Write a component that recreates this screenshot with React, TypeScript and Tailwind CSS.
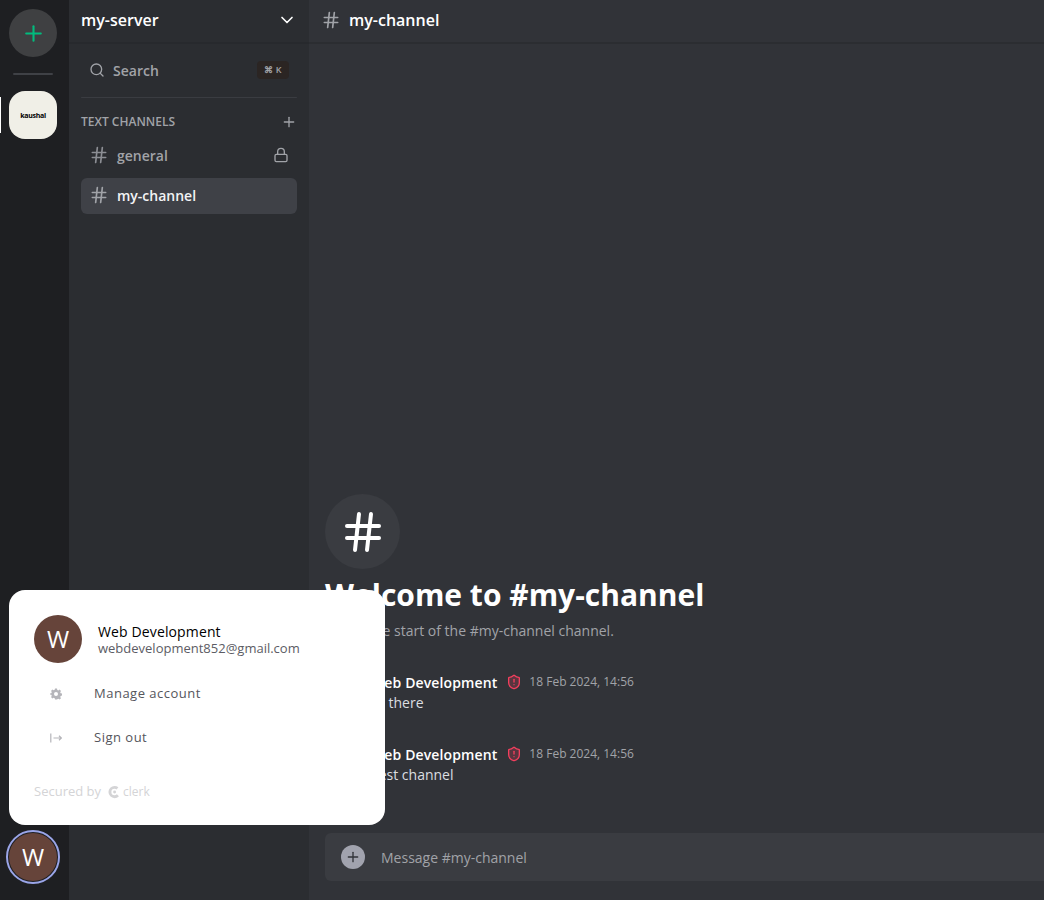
import { ChevronDown, Hash, Lock, Plus, Search } from "lucide-react";

const messages = [
  { text: "Hi there" },
  { text: "Test channel" },
];

function Avatar({ size }: { size: "sm" | "lg" }) {
  return (
    <div
      className={`flex items-center justify-center rounded-full bg-[#66443a] text-white shrink-0 ${
        size === "lg" ? "h-12 w-12 text-[24px]" : "h-9 w-9 text-[18px]"
      }`}
    >
      W
    </div>
  );
}

function ShieldAlert() {
  return (
    <svg width="16" height="16" viewBox="0 0 24 24" fill="#f43f5e33" stroke="#f43f5e" strokeWidth="2" strokeLinecap="round" strokeLinejoin="round">
      <path d="M20 13c0 5-3.5 7.5-7.66 8.95a1 1 0 0 1-.67-.01C7.5 20.5 4 18 4 13V6a1 1 0 0 1 1-1c2 0 4.5-1.2 6.24-2.72a1.17 1.17 0 0 1 1.52 0C14.51 3.81 17 5 19 5a1 1 0 0 1 1 1z" />
      <path d="M12 8v4" />
      <path d="M12 16h.01" />
    </svg>
  );
}

export default function App() {
  return (
    <div className="relative flex h-[900px] w-[1044px] overflow-hidden bg-[#313338] font-['Open_Sans',sans-serif] text-white">
      {/* Server rail */}
      <nav className="flex w-[69px] shrink-0 flex-col items-center bg-[#1e1f22] pt-[9px] pr-[3px] pb-4">
        <div className="flex h-12 w-12 items-center justify-center rounded-full bg-[#3f4042]">
          <Plus className="h-[25px] w-[25px] text-emerald-500" strokeWidth={2} />
        </div>
        <div className="mt-4 h-0.5 w-10 rounded bg-[#3f4146]" />
        <div className="relative mt-4 w-full">
          <div className="absolute left-0 top-[6px] h-9 w-[1px] bg-white" />
          <div className="mx-auto flex h-12 w-12 items-center justify-center rounded-2xl bg-[#f0efe7]">
            <span className="text-[7px] font-bold leading-none tracking-[-0.3px] text-black">kaushal</span>
          </div>
        </div>
        <div className="mt-auto flex h-[54px] w-[54px] items-center justify-center rounded-full border-2 border-[#9aa5e8]">
          <Avatar size="lg" />
        </div>
      </nav>

      {/* Channel sidebar */}
      <aside className="flex w-[240px] shrink-0 flex-col bg-[#2b2d31]">
        <div className="flex h-[44px] shrink-0 items-center justify-between border-b-2 border-[#27292d] pb-0.5 pl-3 pr-3">
          <span className="text-[16px] font-semibold">my-server</span>
          <ChevronDown className="h-5 w-5" />
        </div>
        <div className="px-3 pt-2">
          <div className="flex h-[36px] items-center rounded-md pl-2 pr-2">
            <Search className="h-4 w-4 text-[#a1a3a8]" />
            <span className="ml-2 text-[14px] font-semibold text-[#a1a3a8]">Search</span>
            <span className="ml-auto flex h-[18px] w-8 items-center justify-center rounded bg-[#2b2523] text-[9px] font-semibold text-[#a1a3a8]">⌘ K</span>
          </div>
          <div className="mt-[9px] h-px rounded bg-[#3a3c41]" />
          <div className="mt-[15px] flex items-center justify-between">
            <span className="text-[12px] font-semibold text-[#a1a3a8]">TEXT CHANNELS</span>
            <Plus className="h-4 w-4 text-[#a1a3a8]" />
          </div>
          <div className="mt-[6px] flex h-9 items-center rounded-md px-2">
            <Hash className="h-5 w-5 text-[#8c8e94]" />
            <span className="ml-2 text-[14px] font-semibold text-[#a1a3a8]">general</span>
            <Lock className="ml-auto h-4 w-4 text-[#a1a3a8]" />
          </div>
          <div className="mt-[5px] flex h-9 items-center rounded-md bg-[#3f4147] px-2 pb-0.5">
            <Hash className="h-5 w-5 text-[#a1a3a8]" />
            <span className="ml-2 text-[14px] font-semibold text-[#f2f3f5]">my-channel</span>
          </div>
        </div>
      </aside>

      {/* Main channel, runs past the right edge of the window */}
      <main className="flex w-[900px] shrink-0 flex-col">
        <div className="flex h-[44px] shrink-0 items-center border-b-2 border-[#2b2d31] pb-0.5 px-3">
          <Hash className="h-5 w-5 text-[#a1a3a8]" />
          <span className="ml-2 text-[16px] font-semibold">my-channel</span>
        </div>
        <div className="flex flex-1 flex-col justify-end px-4">
          <div className="flex h-[75px] w-[75px] items-center justify-center rounded-full bg-[#3a3c41]">
            <Hash className="h-12 w-12 text-white" />
          </div>
          <h1 className="mt-1 text-[30px] leading-[44px] font-bold">Welcome to #my-channel</h1>
          <p className="mt-[4px] text-[14px] leading-5 text-[#a1a3a8]">This is the start of the #my-channel channel.</p>
          <div className="mt-[31px] mb-[48px] flex flex-col gap-[31px]">
            {messages.map((m) => (
              <div key={m.text} className="flex gap-[10px]">
                <Avatar size="sm" />
                <div>
                  <div className="flex h-5 items-center">
                    <span className="text-[14px] font-semibold tracking-[0.12px] text-white">Web Development</span>
                    <span className="ml-[9px] mr-[-1px] flex"><ShieldAlert /></span>
                    <span className="ml-2 text-[12px] text-[#a1a3a8]">18 Feb 2024, 14:56</span>
                  </div>
                  <p className="mt-px text-[14px] leading-5 text-[#dbdee1]">{m.text}</p>
                </div>
              </div>
            ))}
          </div>
        </div>
        <div className="px-4 pb-[19px]">
          <div className="flex h-12 items-center rounded-md bg-[#3a3c41] px-4">
            <div className="flex h-6 w-6 items-center justify-center rounded-full bg-[#a1a3ae]">
              <Plus className="h-4 w-4 text-[#313338]" />
            </div>
            <span className="ml-4 text-[14px] text-[#a1a3a8]">Message #my-channel</span>
          </div>
        </div>
      </main>

      {/* Account popover */}
      <div className="absolute left-[9px] top-[590px] flex h-[235px] w-[376px] flex-col rounded-2xl bg-white px-[25px] pt-[25px] text-[#000000]">
        <div className="flex h-12 items-center">
          <Avatar size="lg" />
          <div className="ml-4 pt-px">
            <div className="text-[14px] leading-[18px] font-medium tracking-[0.13px] text-black">Web Development</div>
            <div className="-mt-px text-[13px] leading-[16px] text-[#5c5c64]">webdevelopment852@gmail.com</div>
          </div>
        </div>
        <div className="mt-[9px] flex h-11 items-center">
          <span className="flex w-[60px] pl-4">
            <svg className="h-3 w-3" viewBox="0 0 12 12" fill="#b5b5ba">
              <path
                fillRule="evenodd"
                d="M5 .5h2l.3 1.4 1.1.5 1.2-.8 1.4 1.4-.8 1.2.5 1.1 1.3.3v2l-1.3.3-.5 1.1.8 1.2-1.4 1.4-1.2-.8-1.1.5L7 11.5H5l-.3-1.3-1.1-.5-1.2.8L1 9.1l.8-1.2-.5-1.1L0 6.5v-1l1.3-.3.5-1.1L1 2.9 2.4 1.5l1.2.8 1.1-.5zM6 4a2 2 0 1 0 0 4 2 2 0 0 0 0-4z"
              />
            </svg>
          </span>
          <span className="text-[13px] tracking-[0.5px] text-[#55555c]">Manage account</span>
        </div>
        <div className="flex h-11 items-center">
          <span className="flex w-[60px] pl-4">
            <svg className="h-3 w-3" viewBox="0 0 12 12" fill="none" stroke="#b5b5ba" strokeWidth="1.2">
              <path d="M.8 1.5v9" />
              <path d="M3.5 6h8M9 3.8 11.3 6 9 8.2" />
            </svg>
          </span>
          <span className="text-[13px] tracking-[0.5px] text-[#55555c]">Sign out</span>
        </div>
        <div className="mt-[22px] flex items-center text-[13px] font-medium text-[#d4d4d6]">
          <span>Secured by</span>
          <svg className="ml-1.5 h-3.5 w-3.5" viewBox="0 0 24 24" fill="none">
            <circle cx="13" cy="12" r="8" stroke="#d4d4d6" strokeWidth="5" strokeDasharray="36 14" strokeDashoffset="-6" />
            <circle cx="13" cy="12" r="2.5" fill="#d4d4d6" />
          </svg>
          <span className="ml-0.5 text-[12px] font-medium">clerk</span>
        </div>
      </div>
    </div>
  );
}
